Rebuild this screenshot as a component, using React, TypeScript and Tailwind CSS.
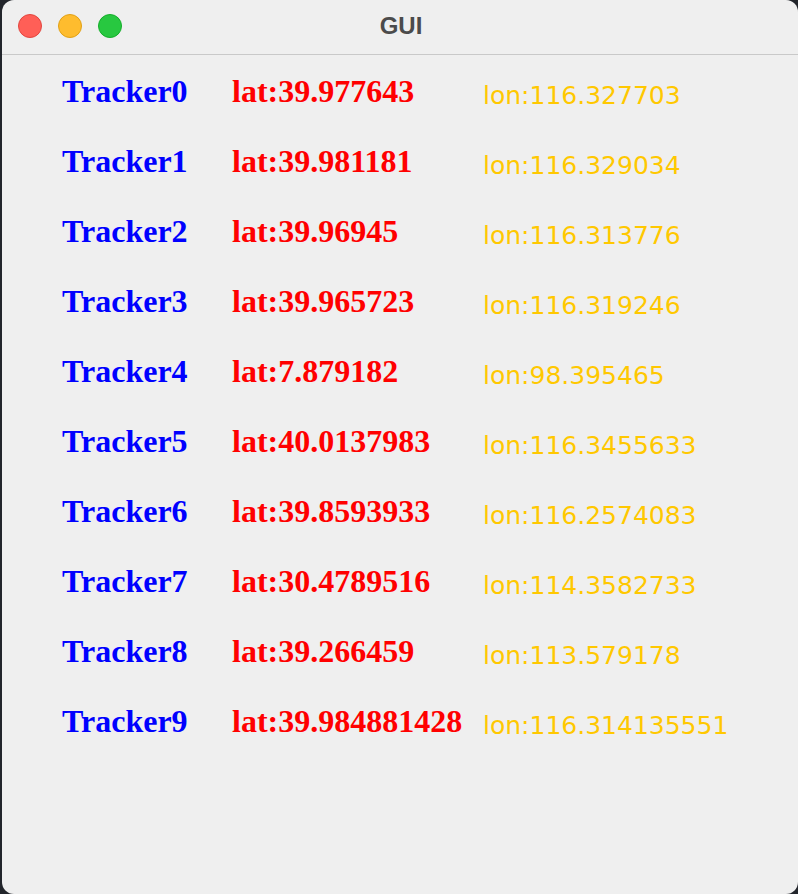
import React from 'react';

type Tracker = { name: string; lat: string; lon: string };

const trackers: Tracker[] = [
  { name: 'Tracker0', lat: '39.977643', lon: '116.327703' },
  { name: 'Tracker1', lat: '39.981181', lon: '116.329034' },
  { name: 'Tracker2', lat: '39.96945', lon: '116.313776' },
  { name: 'Tracker3', lat: '39.965723', lon: '116.319246' },
  { name: 'Tracker4', lat: '7.879182', lon: '98.395465' },
  { name: 'Tracker5', lat: '40.0137983', lon: '116.3455633' },
  { name: 'Tracker6', lat: '39.8593933', lon: '116.2574083' },
  { name: 'Tracker7', lat: '30.4789516', lon: '114.3582733' },
  { name: 'Tracker8', lat: '39.266459', lon: '113.579178' },
  { name: 'Tracker9', lat: '39.984881428', lon: '116.314135551' },
];

export default function App() {
  return (
    <div className="w-[798px] h-[894px] bg-[#22252b] flex pl-[2px] overflow-hidden">
      <div className="flex-1 flex flex-col bg-[#efefef] rounded-[12px] overflow-hidden">
        {/* title bar */}
        <div className="relative h-[55px] shrink-0 border-b border-[#c9c9c9] flex items-center">
          <div className="flex items-center gap-[16px] pl-[16px] pb-[3px]">
            <span className="w-[24px] h-[24px] rounded-full bg-[#ff5f57] border border-[#e2463f]" />
            <span className="w-[24px] h-[24px] rounded-full bg-[#febc2e] border border-[#e1a116]" />
            <span className="w-[24px] h-[24px] rounded-full bg-[#28c840] border border-[#14ae2a]" />
          </div>
          <div className="absolute left-0 right-0 top-[8px] text-center pl-[2px] text-[24px] font-bold text-[#4b4b4b] font-['Liberation_Sans',Arial,sans-serif]">
            GUI
          </div>
        </div>

        {/* rows */}
        <div className="flex flex-col pl-[60px] pt-[1px]">
          {trackers.map((t) => (
            <div key={t.name} className="grid grid-cols-[170px_251px_1fr] h-[70px] items-center">
              <span className="text-[32px] font-bold text-[#0000ff] font-['Liberation_Serif','Times_New_Roman',serif] leading-none">
                {t.name}
              </span>
              <span className="text-[32px] font-bold text-[#ff0000] font-['Liberation_Serif','Times_New_Roman',serif] leading-none whitespace-nowrap">
                lat:{t.lat}
              </span>
              <span className="text-[25px] text-[#ffc800] font-['DejaVu_Sans',sans-serif] leading-none pt-[8px] whitespace-nowrap">
                lon:{t.lon}
              </span>
            </div>
          ))}
        </div>
      </div>
    </div>
  );
}
